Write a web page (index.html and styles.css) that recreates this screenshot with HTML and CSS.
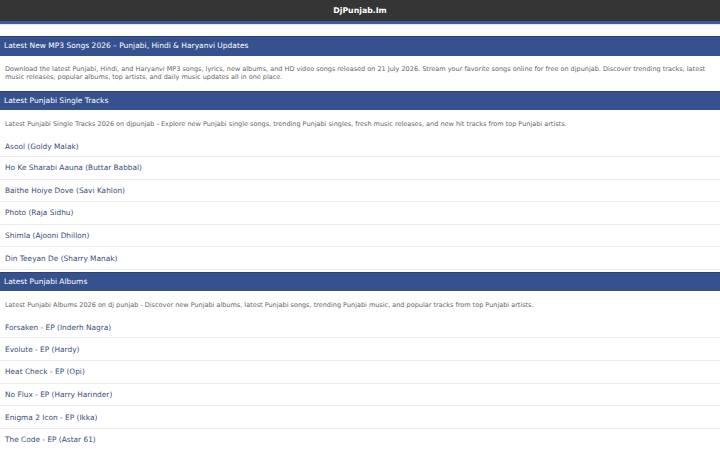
FILE: index.html
```html
<!DOCTYPE html>
<html>
<head>
<meta charset="utf-8">
<title>DjPunjab.Im</title>
<link rel="stylesheet" href="styles.css">
</head>
<body>
<header class="topbar"><span class="brand">DjPunjab.Im</span></header>
<main class="content">
  <section class="block">
    <h1 class="bar">Latest New MP3 Songs 2026 – Punjabi, Hindi &amp; Haryanvi Updates</h1>
    <p class="desc">Download the latest Punjabi, Hindi, and Haryanvi MP3 songs, lyrics, new albums, and HD video songs released on 21 July 2026. Stream your favorite songs online for free on djpunjab. Discover trending tracks, latest music releases, popular albums, top artists, and daily music updates all in one place.</p>
  </section>
  <section class="block">
    <h2 class="bar">Latest Punjabi Single Tracks</h2>
    <p class="desc">Latest Punjabi Single Tracks 2026 on djpunjab - Explore new Punjabi single songs, trending Punjabi singles, fresh music releases, and new hit tracks from top Punjabi artists.</p>
    <ul class="list">
      <li><a href="#">Asool (Goldy Malak)</a></li>
      <li><a href="#">Ho Ke Sharabi Aauna (Buttar Babbal)</a></li>
      <li><a href="#">Baithe Hoiye Dove (Savi Kahlon)</a></li>
      <li><a href="#">Photo (Raja Sidhu)</a></li>
      <li><a href="#">Shimla (Ajooni Dhillon)</a></li>
      <li><a href="#">Din Teeyan De (Sharry Manak)</a></li>
    </ul>
  </section>
  <section class="block">
    <h2 class="bar">Latest Punjabi Albums</h2>
    <p class="desc">Latest Punjabi Albums 2026 on dj punjab - Discover new Punjabi albums, latest Punjabi songs, trending Punjabi music, and popular tracks from top Punjabi artists.</p>
    <ul class="list">
      <li><a href="#">Forsaken - EP (Inderh Nagra)</a></li>
      <li><a href="#">Evolute - EP (Hardy)</a></li>
      <li><a href="#">Heat Check - EP (Opi)</a></li>
      <li><a href="#">No Flux - EP (Harry Harinder)</a></li>
      <li><a href="#">Enigma 2 Icon - EP (Ikka)</a></li>
      <li><a href="#">The Code - EP (Astar 61)</a></li>
    </ul>
  </section>
</main>
</body>
</html>
```

FILE: styles.css
```css
* { box-sizing: border-box; }
html, body { margin: 0; padding: 0; background: #fff; }
body { font-family: "DejaVu Sans", sans-serif; }

.topbar {
  height: 24px;
  background: #353535;
  border-bottom: 3px solid #3f5d9b;
  box-shadow: 0 1px 0 #dfe7f6;
  display: flex;
  align-items: center;
  justify-content: center;
  padding-bottom: 1px;
}
.brand { color: #fff; font-weight: bold; font-size: 7.8px; }

.content { margin-top: 12px; }

.bar {
  margin: 0;
  height: 19.5px;
  line-height: 18.5px;
  background: #36528e;
  border-top: 1px solid #2c4274;
  color: #fff;
  font-weight: normal;
  font-size: 7.5px;
  padding-left: 4px;
}

.desc {
  margin: 0;
  padding: 9.5px 5px;
  font-size: 6.5px;
  line-height: 8px;
  color: #666;
}

.list { list-style: none; margin: 0 0 2px; padding: 0; }
.list li {
  border-bottom: 1px solid #ececec;
  height: 22.6px;
  display: flex;
  align-items: center;
  padding-left: 5px;
}
.list li:first-child { height: 20px; }
.list a {
  color: #3b4d76;
  text-decoration: none;
  font-size: 7.4px;
}
```
